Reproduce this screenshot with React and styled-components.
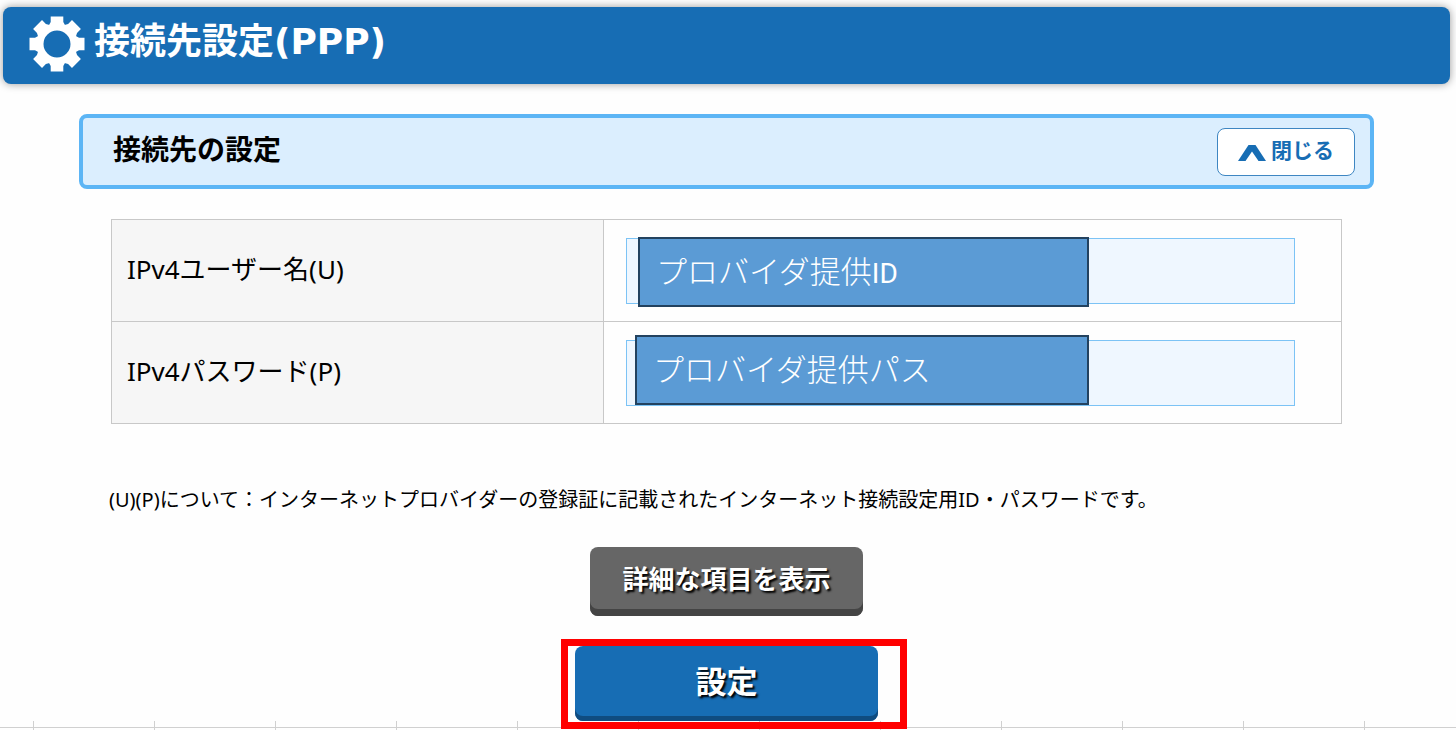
import React, { useState } from 'react';
import styled, { createGlobalStyle } from 'styled-components';

const fontFamily = `'Noto Sans', 'Noto Sans CJK JP', sans-serif`;

const GlobalStyle = createGlobalStyle`
  * {
    box-sizing: border-box;
  }

  body {
    margin: 0;
    background: #fefefe;
    color: #000;
    font-family: ${fontFamily};
  }
`;

const fields = [
  {
    id: 'ipv4-user',
    label: 'IPv4ユーザー名(U)',
    memo: 'プロバイダ提供',
    memoCode: 'ID',
    left: 12,
    top: -1,
  },
  {
    id: 'ipv4-password',
    label: 'IPv4パスワード(P)',
    memo: 'プロバイダ提供パス',
    left: 9,
    top: -5,
  },
];

const GearIcon = () => (
  <svg width="56" height="56" viewBox="-28 -28 56 56" aria-hidden="true">
    <circle r="17" fill="none" stroke="#fff" strokeWidth="7" />
    {[0, 45, 90, 135, 180, 225, 270, 315].map(angle => (
      <path
        key={angle}
        d="M-6.3-27.5H6.3V-22L9-17H-9L-6.3-22Z"
        fill="#fff"
        transform={`rotate(${angle})`}
      />
    ))}
  </svg>
);

const ChevronIcon = () => (
  <svg width="28" height="16" viewBox="0 0 28 16" aria-hidden="true">
    <path d="M0 16L10.500 0H17.500L28 16H20.500L14 6.500L7.500 16Z" fill="#176db4" />
  </svg>
);

const App = () => {
  const [open, setOpen] = useState(true);

  return (
    <>
      <GlobalStyle />
      <PageHeader>
        <GearIcon />
        <h1>接続先設定(PPP)</h1>
      </PageHeader>
      <Main>
        <SectionBar>
          <h2>接続先の設定</h2>
          <CloseButton type="button" onClick={() => setOpen(!open)}>
            <ChevronIcon />
            閉じる
          </CloseButton>
        </SectionBar>
        {open && (
          <SectionBody>
            <SettingTable>
              <tbody>
                {fields.map(({ id, label, memo, memoCode, left, top }) => (
                  <tr key={id}>
                    <th scope="row">
                      <label htmlFor={id}>{label}</label>
                    </th>
                    <td>
                      <Field>
                        <TextInput id={id} type="text" />
                        <Memo $left={left} $top={top}>
                          {memo}
                          {memoCode && <span>{memoCode}</span>}
                        </Memo>
                      </Field>
                    </td>
                  </tr>
                ))}
              </tbody>
            </SettingTable>
            <Note>
              (U)(P)について：インターネットプロバイダーの登録証に記載されたインターネット接続設定用ID・パスワードです。
            </Note>
          </SectionBody>
        )}
        <Actions>
          <DetailButton type="button">詳細な項目を表示</DetailButton>
          <Highlight>
            <SubmitButton type="button">設定</SubmitButton>
          </Highlight>
        </Actions>
      </Main>
      <Ruler />
    </>
  );
};

const PageHeader = styled.header`
  display: flex;
  align-items: flex-start;
  gap: 9px;
  min-height: 77px;
  margin: 7px 6px 0 3px;
  padding: 9px 26px;
  border-radius: 8px;
  background: #176db4;
  box-shadow: 0 0 8px rgba(0, 0, 0, 0.4);
  color: #fff;

  h1 {
    margin: 0;
    font-family: 'DejaVu Sans', 'Noto Sans CJK JP', sans-serif;
    font-size: 36px;
    font-weight: 700;
    line-height: 52px;
  }
`;

const Main = styled.main`
  padding: 30px 82px 0 79px;
`;

const SectionBar = styled.div`
  display: flex;
  align-items: center;
  justify-content: space-between;
  min-height: 75px;
  padding: 0 15px 0 30px;
  border: 4px solid #5cb5f5;
  border-radius: 8px;
  background: #dbeefe;

  h2 {
    margin: 0;
    padding-bottom: 6px;
    font-size: 28px;
    font-weight: 700;
    line-height: 40px;
  }
`;

const CloseButton = styled.button`
  display: flex;
  align-items: center;
  gap: 5px;
  height: 48px;
  padding: 0 20px 4px;
  border: 1px solid #3e86c2;
  border-radius: 8px;
  background: #fff;
  color: #176db4;
  font-family: ${fontFamily};
  font-size: 21px;
  font-weight: 700;
  line-height: 28px;
  cursor: pointer;

  svg {
    margin-top: 6px;
  }
`;

const SectionBody = styled.section`
  padding: 30px 32px 0;
`;

const SettingTable = styled.table`
  width: 100%;
  table-layout: fixed;
  border-collapse: collapse;

  th,
  td {
    height: 102px;
    border: 1px solid #c8c8c8;
  }

  th {
    width: 40%;
    padding: 0 15px 4px;
    background: #f6f6f6;
    font-size: 26px;
    font-weight: 400;
    line-height: 36px;
    text-align: left;
  }

  td {
    padding: 0 46px 0 22px;
  }
`;

const Field = styled.div`
  position: relative;
`;

const TextInput = styled.input`
  display: block;
  width: 100%;
  height: 66px;
  padding: 0 12px;
  border: 1px solid #7cc3f5;
  border-radius: 0;
  background: #eff7ff;
  font-family: ${fontFamily};
  font-size: 26px;
`;

/* note pinned over the input */
const Memo = styled.div`
  position: absolute;
  top: ${({ $top }) => $top}px;
  left: ${({ $left }) => $left}px;
  right: 206px;
  height: 70px;
  padding: 0 16px;
  border: 2px solid #23425f;
  background: #5b9bd5;
  color: #fff;
  font-family: 'Noto Sans CJK JP', sans-serif;
  font-size: 31px;
  font-weight: 300;
  line-height: 62px;
  white-space: nowrap;

  span {
    font-family: Roboto, sans-serif;
    font-size: 28px;
    font-weight: 400;
  }
`;

const Note = styled.p`
  margin: 62px 0 0 -2px;
  font-size: 20px;
  line-height: 28px;
`;

const Actions = styled.div`
  display: flex;
  flex-direction: column;
  align-items: center;
  gap: 30px;
  padding-top: 33px;
`;

const BaseButton = styled.button`
  border: 0;
  border-radius: 8px;
  color: #fff;
  font-family: ${fontFamily};
  font-weight: 700;
  text-shadow: 2px 2px 2px #000;
  cursor: pointer;
`;

const DetailButton = styled(BaseButton)`
  min-width: 273px;
  height: 69px;
  padding: 0 30px 8px;
  background: #666;
  box-shadow: inset 0 -7px 0 #444;
  font-size: 26px;
`;

const SubmitButton = styled(BaseButton)`
  display: block;
  min-width: 303px;
  height: 75px;
  padding: 0 30px 8px;
  background: #176db4;
  box-shadow: inset 0 -5px 0 #0f4c80;
  font-size: 31px;
`;

const Highlight = styled.div`
  position: relative;

  &::after {
    content: '';
    position: absolute;
    z-index: 1;
    inset: -7px -29px -8px -14px;
    border: 7px solid #f00;
    pointer-events: none;
  }
`;

const Ruler = styled.div`
  height: 9px;
  background:
    linear-gradient(#d0d0d0, #d0d0d0) 0 6px / 100% 1px no-repeat,
    linear-gradient(90deg, #d0d0d0 1px, transparent 1px) 33px 0 / 121px 100%;
`;

export default App;
